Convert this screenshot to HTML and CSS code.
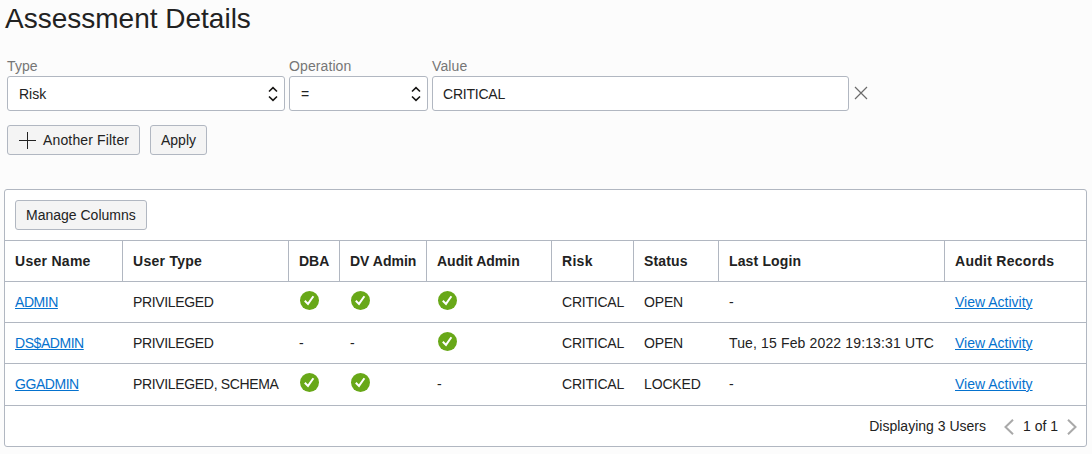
FILE: index.html
```html
<!DOCTYPE html>
<html lang="en">
<head>
<meta charset="utf-8">
<title>Assessment Details</title>
<link rel="stylesheet" href="styles.css">
</head>
<body>
<svg width="0" height="0" class="defs" aria-hidden="true">
  <symbol id="check" viewBox="0 0 19 19"><circle cx="9.5" cy="9.5" r="9.5" fill="#68a818"/><path d="M4.8 9.7 8 12.9 13.4 5.2" fill="none" stroke="#fff" stroke-width="2"/></symbol>
  <symbol id="updown" viewBox="0 0 10 16"><path d="M1 5.5 5 1.7 9 5.5M1 10.5 5 14.3 9 10.5" fill="none" stroke="#161513" stroke-width="1.6"/></symbol>
</svg>
<main class="page">
  <h1 class="title">Assessment Details</h1>
  <section class="filters">
    <div class="field field-type"><label>Type</label><div class="control"><span>Risk</span><svg class="updown"><use href="#updown"/></svg></div></div>
    <div class="field field-operation"><label>Operation</label><div class="control"><span>=</span><svg class="updown"><use href="#updown"/></svg></div></div>
    <div class="field field-value"><label>Value</label><div class="control"><span class="risk">CRITICAL</span></div></div>
    <svg class="remove" viewBox="0 0 14 14"><path d="M1 1 13 13M13 1 1 13" fill="none" stroke="#6b6b6b" stroke-width="1.2"/></svg>
  </section>
  <div class="actions">
    <button class="btn btn-add"><svg class="plus" viewBox="0 0 17 17"><path d="M8.5 0V17M0 8.5H17" stroke="#222" stroke-width="1"/></svg>Another Filter</button>
    <button class="btn btn-apply">Apply</button>
  </div>
  <section class="card">
    <div class="toolbar"><button class="btn btn-manage">Manage Columns</button></div>
    <table class="users">
      <colgroup><col class="c-name"><col class="c-type"><col class="c-dba"><col class="c-dv"><col class="c-audit"><col class="c-risk"><col class="c-status"><col class="c-login"><col class="c-records"></colgroup>
      <thead><tr><th class="wide">User Name</th><th class="wide">User Type</th><th>DBA</th><th>DV Admin</th><th>Audit Admin</th><th class="wide">Risk</th><th class="loose">Status</th><th class="loose">Last Login</th><th class="wide">Audit Records</th></tr></thead>
      <tbody>
        <tr><td class="name"><a href="#">ADMIN</a></td><td class="type">PRIVILEGED</td><td><svg class="check"><use href="#check"/></svg></td><td><svg class="check"><use href="#check"/></svg></td><td><svg class="check"><use href="#check"/></svg></td><td class="risk">CRITICAL</td><td class="status">OPEN</td><td>-</td><td><a href="#">View Activity</a></td></tr>
        <tr><td class="name"><a href="#">DS$ADMIN</a></td><td class="type">PRIVILEGED</td><td>-</td><td>-</td><td><svg class="check"><use href="#check"/></svg></td><td class="risk">CRITICAL</td><td class="status">OPEN</td><td class="loose">Tue, 15 Feb 2022 19:13:31 UTC</td><td><a href="#">View Activity</a></td></tr>
        <tr><td class="name"><a href="#">GGADMIN</a></td><td class="type">PRIVILEGED, SCHEMA</td><td><svg class="check"><use href="#check"/></svg></td><td><svg class="check"><use href="#check"/></svg></td><td>-</td><td class="risk">CRITICAL</td><td class="status">LOCKED</td><td>-</td><td><a href="#">View Activity</a></td></tr>
      </tbody>
    </table>
    <footer class="pager">
      <span class="count">Displaying 3 Users</span>
      <svg class="arrow" viewBox="0 0 10 16"><path d="M9 .8 1.5 8 9 15.2" fill="none" stroke="#a9a9a9" stroke-width="2"/></svg>
      <span class="position">1 of 1</span>
      <svg class="arrow" viewBox="0 0 10 16"><path d="M1 .8 8.5 8 1 15.2" fill="none" stroke="#a9a9a9" stroke-width="2"/></svg>
    </footer>
  </section>
</main>
</body>
</html>
```

FILE: styles.css
```css
* { box-sizing: border-box; }
body {
  margin: 0;
  background: #fcfcfc;
  color: #222;
  font: 14px/20px "Liberation Sans", Arial, sans-serif;
}
svg { display: block; flex: none; }
.defs { display: none; }
.page { padding: 0 5px 0 4px; }
.title { margin: 0; padding: 3px 0 0 1px; height: 57px; font-size: 28px; line-height: 32px; font-weight: 400; }
.filters { display: flex; gap: 4px; padding-left: 3px; height: 54px; }
.field label { display: block; height: 19px; line-height: 19px; color: #767676; letter-spacing: .1px; }
.field-type { width: 278px; }
.field-operation { width: 139px; }
.field-value { width: 417px; }
.control {
  display: flex;
  align-items: center;
  justify-content: space-between;
  height: 35px;
  padding: 1px 6px 0 11px;
  border: 1px solid #b1b7c1;
  border-radius: 3px;
  background: #fff;
}
.field-value .control { padding-left: 10px; }
.updown { width: 10px; height: 16px; }
.remove { width: 14px; height: 14px; margin: 29px 0 0 1px; }
.actions { display: flex; gap: 10px; padding: 14px 0 0 3px; }
.btn {
  display: flex;
  align-items: center;
  height: 30px;
  padding: 0 0 0 10px;
  border: 1px solid #b1b7c1;
  border-radius: 3px;
  background: #f4f4f4;
  color: #222;
  font: inherit;
  white-space: nowrap;
}
.btn-add { width: 133px; letter-spacing: .15px; }
.btn-apply { width: 57px; }
.btn-manage { width: 132px; }
.plus { width: 17px; height: 17px; margin: 1px 7px 0 1px; }
.card { margin-top: 34px; border: 1px solid #b1b7c1; border-radius: 3px; background: #fff; }
.toolbar { height: 50px; padding: 10px; }
.users { width: 1081px; table-layout: fixed; border-collapse: separate; border-spacing: 0; border-top: 1px solid #b1b7c1; }
.users th, .users td { height: 41px; padding: 0 0 0 10px; border-bottom: 1px solid #b1b7c1; text-align: left; white-space: nowrap; vertical-align: middle; }
.users th { border-right: 1px solid #b1b7c1; }
.users th:last-child { border-right: 0; }
.users .wide { letter-spacing: .28px; }
.users .loose { letter-spacing: .14px; }
.users tbody tr:last-child td { height: 42px; padding-bottom: 1px; }
.name { letter-spacing: -.45px; }
.type { letter-spacing: -.34px; }
.risk { letter-spacing: -.22px; }
.status { letter-spacing: -.15px; }
.c-name { width: 118px; }
.c-type { width: 166px; }
.c-dba { width: 51px; }
.c-dv { width: 87px; }
.c-audit { width: 125px; }
.c-risk { width: 82px; }
.c-status { width: 85px; }
.c-login { width: 226px; }
.c-records { width: 141px; }
.users a { color: #0572ce; text-decoration: underline; }
.check { width: 19px; height: 19px; margin: -2px 0 2px 1px; }
.pager { display: flex; align-items: center; justify-content: flex-end; height: 40px; padding-right: 9px; }
.count { margin-right: 18px; }
.arrow { width: 10px; height: 16px; margin-top: 1px; }
.position { margin: 0 9px; }
```
